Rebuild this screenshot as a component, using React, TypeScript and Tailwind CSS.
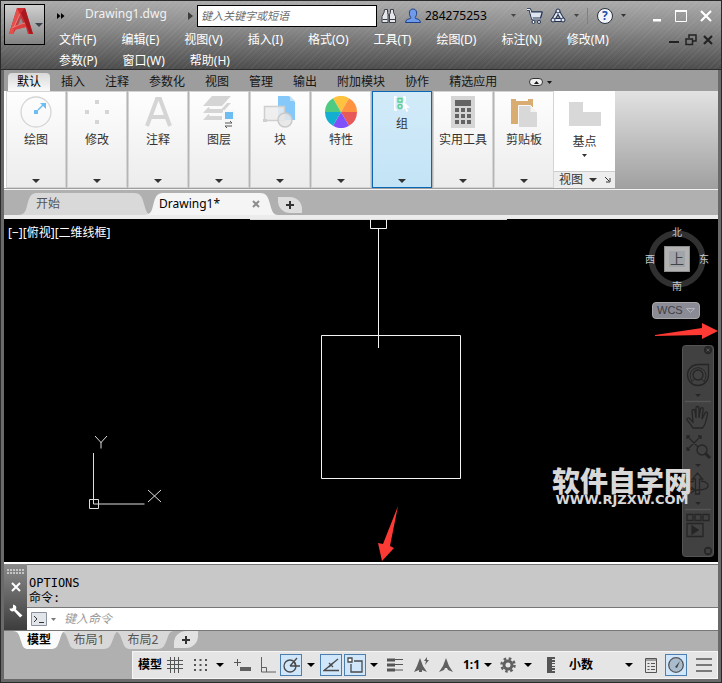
import type { ReactNode } from "react";

const MENUS = [
  "文件(F)", "编辑(E)", "视图(V)", "插入(I)", "格式(O)", "工具(T)",
  "绘图(D)", "标注(N)", "修改(M)", "参数(P)", "窗口(W)", "帮助(H)",
];

const RIBBON_TABS = ["插入", "注释", "参数化", "视图", "管理", "输出", "附加模块", "协作", "精选应用"];

function Caret({ className = "" }: { className?: string }) {
  return (
    <svg width="8" height="4" viewBox="0 0 8 4" className={`shrink-0 ${className}`} aria-hidden="true">
      <path d="M0 0h8L4 4z" fill="currentColor" />
    </svg>
  );
}

function SmallCaret({ className = "" }: { className?: string }) {
  return (
    <svg width="5" height="3" viewBox="0 0 5 3" className={`shrink-0 ${className}`} aria-hidden="true">
      <path d="M0 0h5L2.500 3z" fill="currentColor" />
    </svg>
  );
}

function AppLogo() {
  return (
    <svg width="24" height="26" viewBox="0 0 24 26" className="shrink-0" aria-hidden="true">
      <path d="M8 0h8l8 26h-5l-2-7-10 2-3 5H0z" fill="#cf2a30" />
      <path d="M8 0l3 6L6 19l-2 7H0z" fill="#e4504c" />
      <path d="M16 0l8 26h-3L12 5z" fill="#a8191f" />
      <path d="M11 7l4 8-8 3z" fill="#b5474a" />
      <path d="M12 10l2 5-5 2z" fill="#8f8f8f" />
      <path d="M3 20c4-2 8-4 13-5l1 4-11 3z" fill="#de403e" />
      <path d="M3 20c4-2 8-4 13-5M11 6L5 19" stroke="#f08c86" strokeWidth=".8" fill="none" />
    </svg>
  );
}

function TitleBar() {
  return (
    <div className="flex h-7 items-center pt-px">
      <button aria-label="展开快速访问工具栏" className="ml-3">
        <svg width="8" height="6" viewBox="0 0 8 6" className="block"><path d="M0 0l3.500 3L0 6zM4 0l3.500 3L4 6z" fill="#000" /></svg>
      </button>
      <h1 className="ml-5 w-[103px] pb-1 text-[12px] leading-4 text-[#f2f2f2]">Drawing1.dwg</h1>
      <svg width="5" height="8" viewBox="0 0 5 8" className="mr-1" aria-hidden="true"><path d="M0 0l5 4-5 4z" fill="#3c3c3c" /></svg>
      <input
        type="text"
        aria-label="搜索"
        placeholder="键入关键字或短语"
        className="h-[22px] w-[180px] border border-black bg-white px-[3px] text-[11px] italic text-black outline-none placeholder:text-[#6d6d6d]"
      />
      <button aria-label="查找" className="ml-1">
        <svg width="16" height="16" viewBox="0 0 16 16" className="block" fill="#e4e6e9" stroke="#3a3f48" strokeWidth="1">
          <path d="M3.500 1.500h3v3l.5 2v8h-6v-6l2-4zM9.500 1.500h3v3l2 4v6h-6v-8l1-2z" />
          <path d="M7 7h2M1.500 11.500h5M9 11.500h5.500" />
        </svg>
      </button>
      <button aria-label="用户帐户" className="ml-2 flex items-center gap-1">
        <svg width="16" height="16" viewBox="0 0 16 16" fill="#6f9bea" stroke="#1f3f88">
          <path d="M.5 14.500c0-3 3-3.500 5-4 .6-.3.400-1 0-1.500C3.500 6 4 1 8 1s4.500 5 2.500 8c-.4.5-.6 1.200 0 1.500 2 .5 5 1 5 4z" />
        </svg>
        <span className="text-[12px] leading-4 text-black">284275253</span>
      </button>
      <SmallCaret className="ml-6 text-[#444]" />
      <button aria-label="应用商店" className="ml-[10px]">
        <svg width="17" height="16" viewBox="0 0 17 16" className="block" fill="none" strokeLinejoin="round">
          <path d="M1 1.500h3L6.500 11h8M4.500 4.500h11l-1.500 5H6z" stroke="#20304f" strokeWidth="2.600" />
          <path d="M1 1.500h3L6.500 11h8" stroke="#eef1f7" />
          <path d="M4.500 4.500h11l-1.500 5H6z" fill="#dfe5f0" />
          <circle cx="7.500" cy="14" r="1.500" fill="#fff" stroke="#20304f" /><circle cx="13" cy="14" r="1.500" fill="#fff" stroke="#20304f" />
        </svg>
      </button>
      <button aria-label="保持连接" className="ml-[7px] flex items-center gap-2">
        <svg width="16" height="16" viewBox="0 0 16 16" fill="none">
          <path d="M8 3.500L3 12h10z" stroke="#20304f" strokeWidth="4" strokeLinejoin="round" />
          <path d="M8 3.500L3 12h10z" stroke="#e3e8f2" strokeWidth="2" strokeLinejoin="round" />
          <circle cx="8" cy="3" r="2" fill="#e3e8f2" stroke="#20304f" />
          <circle cx="3" cy="12" r="2" fill="#e3e8f2" stroke="#20304f" />
          <circle cx="13" cy="12" r="2" fill="#e3e8f2" stroke="#20304f" />
        </svg>
        <SmallCaret className="text-[#444]" />
      </button>
      <span className="ml-2 h-4 w-px bg-[#808080]" />
      <button aria-label="帮助" className="ml-[9px] flex items-center gap-2">
        <span className="flex h-4 w-4 items-center justify-center rounded-full border border-[#26313f] bg-[#f2f4f8] text-[12px] font-bold leading-none text-[#1d4fa8]">?</span>
        <SmallCaret className="text-[#333]" />
      </button>
      <div className="ml-auto mr-[9px] flex items-center gap-[13px]">
        <button aria-label="最小化"><svg width="9" height="12" viewBox="0 0 9 12" className="block"><path d="M0 9h8v2.500H0z" fill="#fff" /></svg></button>
        <button aria-label="最大化"><svg width="12" height="12" viewBox="0 0 12 12" className="block"><path d="M.5.5h11v11H.5z" stroke="#fff" fill="none" /><path d="M0 0h12v2H0z" fill="#fff" /></svg></button>
        <button aria-label="关闭"><svg width="12" height="12" viewBox="0 0 12 12" className="block"><path d="M1 1l10 10M11 1L1 11" stroke="#fff" strokeWidth="2.200" /></svg></button>
      </div>
    </div>
  );
}

function Header() {
  return (
    <header className="flex h-[69px] border-b border-[#2d2d2d] bg-[repeating-linear-gradient(135deg,#ffffff0d_0px,#ffffff0d_1px,transparent_1px,transparent_4px),linear-gradient(#ababab,#8a8a8a_40%,#4d4d4d)]">
      <button aria-label="应用程序菜单" className="ml-[3px] mt-[3px] flex h-[41px] w-[41px] shrink-0 items-center border border-black bg-[linear-gradient(#d0d0d0,#828282)] pb-2 pl-1">
        <AppLogo />
        <Caret className="ml-[2px] mt-2 text-[#3d434d]" />
      </button>
      <div className="min-w-0 flex-1">
        <TitleBar />
        <div className="flex pl-[14px]">
          <nav className="flex flex-1 flex-wrap gap-x-[25px] text-[12px] leading-[21px] text-white">
            {MENUS.map((m) => <button key={m}>{m}</button>)}
          </nav>
          <div className="mr-2 flex h-[21px] items-center gap-[6px] pl-2">
            <button aria-label="最小化图形"><svg width="10" height="12" viewBox="0 0 10 12" className="block"><path d="M0 7h10v2H0z" fill="#222" /></svg></button>
            <button aria-label="还原图形"><svg width="12" height="12" viewBox="0 0 12 12" className="block" fill="none" stroke="#222" strokeWidth="1.500"><path d="M4 4V1h7v6H8M1 5h6.500v5.500H1z" /></svg></button>
            <button aria-label="关闭图形"><svg width="10" height="12" viewBox="0 0 10 12" className="block"><path d="M1 2l8 8M9 2l-8 8" stroke="#222" strokeWidth="2.200" /></svg></button>
          </div>
        </div>
      </div>
    </header>
  );
}

function RibbonTabs() {
  return (
    <div className="flex h-[21px] items-end bg-[#9d9d9d] pl-1 text-[12px] leading-[18px] text-[#161616]">
      <button className="h-[18px] w-[42px] rounded-t-sm bg-[linear-gradient(#d8d8d8,#fafafa)] text-black">默认</button>
      <div className="ml-[11px] flex gap-5">
        {RIBBON_TABS.map((t) => <button key={t}>{t}</button>)}
      </div>
      <button aria-label="最小化功能区" className="ml-8 flex h-[18px] items-center gap-1">
        <span className="flex h-2 w-[14px] items-center justify-center rounded-sm border border-[#333] bg-[#f0f0f0]">
          <SmallCaret className="rotate-180" />
        </span>
        <SmallCaret />
      </button>
    </div>
  );
}

const ICONS: Record<string, ReactNode> = {
  draw: (
    <svg width="32" height="32" viewBox="0 0 32 32" fill="none">
      <circle cx="16" cy="16" r="15" stroke="#d5d5d5" strokeWidth="1.300" />
      <path d="M14 14h4v4h-4z" fill="#6dbcf2" /><path d="M18 14l5-5" stroke="#6dbcf2" strokeWidth="1.500" /><path d="M20 7h6v6z" fill="#6dbcf2" />
    </svg>
  ),
  modify: <svg width="32" height="32" viewBox="0 0 32 32" fill="#d5d5d5"><path d="M14 4h4v4h-4zM4 14h4v4H4zM24 14h4v4h-4zM14 24h4v4h-4z" /></svg>,
  annotate: <svg width="32" height="32" viewBox="0 0 32 32"><path d="M5 30L15 3h3l10 27M9 21h15" fill="none" stroke="#d5d5d5" strokeWidth="4" /></svg>,
  layers: (
    <svg width="32" height="34" viewBox="0 0 32 34">
      <path d="M9 1h19l-9 10H0zM5.500 12L0 18h19l9-10h-4l-5.500 6H7zM5.500 19L0 25h19v-4H7z" fill="#d5d5d5" />
      <path d="M20 15h12v18H20z" fill="#f7f7f7" /><path d="M22 17h8v7h-8z" fill="#6dbcf2" />
      <path d="M22 28h7l-2-2M29 31h-7l2 2" stroke="#555" fill="none" />
    </svg>
  ),
  block: (
    <svg width="34" height="34" viewBox="0 0 34 34">
      <path d="M15 1h11l6 6v18H15z" fill="#85c8fa" /><path d="M27 1l5 5h-5z" fill="#bfe2fc" />
      <path d="M1.500 11.500h20v14h-20z" fill="#ececec" fillOpacity=".85" stroke="#cfcfcf" strokeWidth="1.500" />
      <path d="M0 24h4v3H0z" fill="#cfcfcf" /><circle cx="22" cy="25" r="7" fill="#e6e6e6" fillOpacity=".85" stroke="#c9c9c9" strokeWidth="1.500" />
    </svg>
  ),
  properties: (
    <svg width="32" height="32" viewBox="0 0 32 32">
      <path d="M16 16L8 2.140A16 16 0 0 1 24 2.140z" fill="#ffc23f" />
      <path d="M16 16l8-13.860A16 16 0 0 1 32 16z" fill="#ff9340" />
      <path d="M16 16h16a16 16 0 0 1-8 13.860z" fill="#e85858" />
      <path d="M16 16l8 13.860a16 16 0 0 1-16 0z" fill="#8050fb" />
      <path d="M16 16L8 29.860A16 16 0 0 1 0 16z" fill="#13aed0" />
      <path d="M16 16H0A16 16 0 0 1 8 2.140z" fill="#4ecb80" />
    </svg>
  ),
  group: (
    <svg width="16" height="16" viewBox="0 0 16 16" fill="none">
      <path d="M3 1H.8v13H3M9 1h2v5" stroke="#fff" strokeWidth="1.500" />
      <path d="M4 2.500h4v3.500H4z" stroke="#58cf8b" strokeWidth="1.300" /><circle cx="6" cy="10.500" r="2" stroke="#58cf8b" strokeWidth="1.300" />
      <path d="M9 5v9l2-2 1.500 4 1.700-.8-1.700-3.500H16z" fill="#fff" />
    </svg>
  ),
  utilities: (
    <svg width="24" height="32" viewBox="0 0 24 32">
      <path d="M0 0h24v32H0z" fill="#d5d5d5" />
      <path d="M4 4h16v6H4zM4 12h4v4H4zM10 12h4v4h-4zM16 12h4v4h-4zM4 18h4v4H4zM10 18h4v4h-4zM16 18h4v4h-4zM4 24h4v4H4zM10 24h4v4h-4zM16 24h4v4h-4z" fill="#636363" />
    </svg>
  ),
  clipboard: (
    <svg width="26" height="32" viewBox="0 0 26 32">
      <path d="M0 3h5v2h12V3h5v8H8v17H0z" fill="#d9ac72" />
      <path d="M7.500 9.500h12l7 7v15h-19z" fill="#d8d8d8" stroke="#f8f8f8" /><path d="M19.500 9.500v6.500H26z" fill="#f3f3f3" />
    </svg>
  ),
};

const PANELS = [
  { label: "绘图", icon: "draw" }, { label: "修改", icon: "modify" }, { label: "注释", icon: "annotate" },
  { label: "图层", icon: "layers" }, { label: "块", icon: "block" }, { label: "特性", icon: "properties" },
  { label: "组", icon: "group" }, { label: "实用工具", icon: "utilities" }, { label: "剪贴板", icon: "clipboard" },
];

function Ribbon() {
  return (
    <div className="flex h-[98px] border-b border-[#9e9e9e] bg-[linear-gradient(#e2e2e2,#a0a0a0)]">
      <div className="flex gap-px border-l-2 border-white bg-[#b5b5b5] text-[12px] leading-4 text-[#333]">
        {PANELS.map((p) => {
          const active = p.icon === "group";
          return (
            <button
              key={p.icon}
              className={`flex w-[60px] flex-col items-center border pb-1 pt-1 ${active ? "border-[#0b66b5] bg-[linear-gradient(#d3ebf9,#c3e4f6)]" : "border-[#d4d4d4] bg-[linear-gradient(#fefefe,#ececec)]"}`}
            >
              <span className={`flex items-center justify-center ${active ? "h-4" : "h-8"}`}>{ICONS[p.icon]}</span>
              <span className="mt-1 whitespace-nowrap">{p.label}</span>
              <Caret className="mt-auto" />
            </button>
          );
        })}
      </div>
      <div className="flex w-[61px] flex-col bg-white text-[12px] leading-4 text-[#333]">
        <button className="flex flex-1 flex-col items-center pt-[11px]">
          <svg width="32" height="24" viewBox="0 0 32 24"><path d="M0 0h14v10h18v14H0z" fill="#d8d8d8" /></svg>
          <span className="mt-2">基点</span>
          <SmallCaret className="mt-1" />
        </button>
        <button className="flex h-[17px] items-center border-t border-[#ccc] bg-[#ededed] pl-[5px]">
          视图
          <Caret className="ml-[6px]" />
          <svg width="6" height="6" viewBox="0 0 6 6" className="ml-2" aria-hidden="true"><path d="M0 0l4 4M5 1v4H1" stroke="#333" fill="none" /></svg>
        </button>
      </div>
    </div>
  );
}

function FileTabShape({ fill }: { fill: string }) {
  return (
    <svg className="absolute inset-0 h-full w-full" viewBox="0 0 134 22" preserveAspectRatio="none" aria-hidden="true">
      <path d="M0 22C8 22 8 16 10 9C12 2 14 0 20 0H116C123 0 124 4 126 11C128 18 129 22 134 22z" fill={fill} />
    </svg>
  );
}

function FileTabs() {
  return (
    <div className="flex h-[30px] items-end border-b-4 border-t border-b-[#ececec] border-t-[#f2f2f2] bg-[#b0b0b0] pl-[14px]">
      <button className="relative h-[22px] w-[134px] pl-[18px] text-left text-[12px] text-[#555]">
        <FileTabShape fill="#d9d9d9" />
        <span className="relative">开始</span>
      </button>
      <div className="relative -ml-2 flex h-[22px] w-[134px] items-center pl-[15px] pr-[18px] text-[12px] text-black">
        <FileTabShape fill="#f5f5f5" />
        <button className="relative flex-1 text-left">Drawing1*</button>
        <button aria-label="关闭选项卡" className="relative">
          <svg width="8" height="8" viewBox="0 0 8 8" className="block"><path d="M1 1l6 6M7 1L1 7" stroke="#8d8d8d" strokeWidth="2" /></svg>
        </button>
      </div>
      <button aria-label="新建选项卡" className="mb-[2px] flex h-4 w-6 items-center justify-center rounded-bl-xl rounded-tr-xl bg-[#dedede]">
        <svg width="8" height="8" viewBox="0 0 8 8"><path d="M4 0v8M0 4h8" stroke="#333" strokeWidth="2" /></svg>
      </button>
    </div>
  );
}

function NavBar() {
  return (
    <svg width="32" height="212" viewBox="0 0 32 212" fill="none" stroke="#262626" strokeWidth="1.300" role="img" aria-label="导航栏">
      <rect x=".5" y=".5" width="31" height="211" rx="3" fill="#414141" stroke="#555" strokeWidth="1" />
      <circle cx="26" cy="5" r="3.500" fill="#2b2b2b" /><path d="M24.500 3.500l3 3m0-3l-3 3" stroke="#555" strokeWidth="1" />
      <path d="M16 19.500h10.500V30a10.500 10.500 0 1 1-10.500-10.500z" /><circle cx="16" cy="30" r="5" /><path d="M10 36a8 8 0 1 1 12 0M12.500 34l-4 4M19.500 34l4 4" strokeWidth="1" />
      <path d="M13 49h6l-3 3z" fill="#262626" stroke="none" />
      <path d="M3 56.500h26M3 164.500h26" stroke="#555" />
      <path d="M11 83c-2-3-4-6-6-8-1-2 2-3 3-1l3 3-1-11c0-2 3-2 3 0l1 7V63c0-2 3-2 3 0v10l1.500-9c.5-2 3-1.500 2.700.5L20 74l3-6c1-2 3-1 2.500 1-1 6-2 11-5 14z" />
      <path d="M5 91l14 14M19 91L5 105M5 94v-3h3M16 91h3v3M5 102v3h3" /><circle cx="20" cy="105" r="5" fill="#414141" /><path d="M23 108l5 5" strokeWidth="3" />
      <path d="M13 119h6l-3 3z" fill="#262626" stroke="none" />
      <path d="M13.500 149v-15h-3l5-6 5 6h-3v15zM12 136c-12 2-8 9 4 9 13 0 13-8 3-9M9 142l4 3-4 3" />
      <path d="M13 157h6l-3 3z" fill="#262626" stroke="none" />
      <path d="M5 169.500h6v6H5zM13 169.500h6v6h-6zM21 169.500h6v6h-6zM5 178.500h16v13H5z" /><path d="M10 181l6 4-6 4z" fill="#262626" />
      <circle cx="26" cy="206" r="3.500" fill="#2b2b2b" /><path d="M24 205h4M24 207h4" stroke="#555" strokeWidth="1" />
    </svg>
  );
}

function Canvas() {
  return (
    <main className="relative min-h-[343px] flex-1 overflow-hidden bg-black">
      <svg className="absolute left-0 top-0" width="505" height="343" viewBox="0 0 505 343" fill="none" stroke="#f4f4f4" role="img" aria-label="图形">
        <path d="M246 .5h257" stroke="#dcdcdc" />
        <path d="M366.500 0v9.500h16V0M374.500 10v119M317.500 116.500h139v143h-139z" />
        <path d="M89.500 234v51h51M85.500 280.500h9v9h-9zM91 217l6 6.500 6-6.500M97 223v6.500M144 271l13 12M157 271l-13 12" stroke="#ddd" />
        <path d="M394 287l-8 40 4 2-12 13-4-18 5 1z" fill="#fd3a34" stroke="none" />
      </svg>
      <p className="absolute left-1 top-[6px] whitespace-nowrap text-[12px] leading-4 text-white">[−][俯视][二维线框]</p>
      <svg className="absolute right-1 top-px" width="74" height="80" viewBox="0 0 74 80" fontSize="10" fill="#c8c8c8" textAnchor="middle" role="img" aria-label="视图方位">
        <circle cx="37" cy="39" r="25.500" fill="none" stroke="#303030" strokeWidth="6" />
        <rect x="24.500" y="26.500" width="25" height="25" fill="#b2b2b2" stroke="#8d8d8d" />
        <rect x="29" y="31" width="16" height="16" fill="#a1a5aa" />
        <text x="37" y="44" fontSize="14" fill="#3f4448">上</text>
        <text x="37" y="16">北</text><text x="37" y="70">南</text><text x="10" y="43">西</text><text x="64" y="43">东</text>
      </svg>
      <button className="absolute right-[18px] top-[83px] flex h-[17px] w-12 items-center justify-between rounded border border-[#a9a9ac] bg-[#8b8b95] px-1 font-['Liberation_Sans',sans-serif] text-[11px] leading-none text-[#3e3e44]">
        WCS
        <svg width="9" height="5" viewBox="0 0 9 5" aria-hidden="true"><path d="M.5.5h8l-4 4z" fill="none" stroke="#b5b5bd" /></svg>
      </button>
      <svg className="absolute right-0 top-[103px]" width="64" height="18" viewBox="0 0 64 18" aria-hidden="true"><path d="M1 13l47-7V1l16 8-16 8v-4L1 14z" fill="#fd3a34" /></svg>
      <div className="absolute right-1 top-[126px]"><NavBar /></div>
      <div className="absolute right-[26px] top-[248px] text-center text-[#d8d8d8]">
        <p className="text-[28px] font-black leading-7">软件自学网</p>
        <p className="font-['DejaVu_Sans',sans-serif] text-[13px] font-bold leading-[10px]">WWW.RJZXW.COM</p>
      </div>
    </main>
  );
}

function CommandLine() {
  return (
    <section aria-label="命令行" className="flex h-[69px] border-b border-t-2 border-b-[#777] border-t-white">
      <div className="flex w-[23px] shrink-0 flex-col items-center gap-2 bg-[linear-gradient(#8a8a8a,#3d3d3d)] pt-[5px]">
        <svg width="18" height="5" viewBox="0 0 18 5" aria-hidden="true"><path d="M0 1h18M0 4h18" stroke="#c5c5c5" strokeWidth="2" strokeDasharray="2 1" /></svg>
        <button aria-label="关闭命令行"><svg width="10" height="10" viewBox="0 0 10 10" className="block"><path d="M1 1l8 8M9 1L1 9" stroke="#fff" strokeWidth="2" /></svg></button>
        <button aria-label="自定义" className="mt-1"><svg width="14" height="14" viewBox="0 0 14 14" className="block"><path d="M4 .5v3L3 4.500H.5C1 7 3 8 5 7l6 6.500 2.500-2L7 5.500C8 3 7 1 4 .5z" fill="#fff" /></svg></button>
      </div>
      <div className="flex min-w-0 flex-1 flex-col border-t border-[#777]">
        <div className="flex-1 bg-[#c8c8c8] pl-[2px] pt-[11px] text-[12px] leading-[15px] text-black">
          <p className="font-['DejaVu_Sans_Mono',monospace]">OPTIONS</p>
          <p className="font-['DejaVu_Sans_Mono','Noto_Sans_CJK_SC',monospace]">命令:</p>
        </div>
        <div className="flex h-[23px] items-center border-t border-[#777] bg-white pl-1">
          <button aria-label="最近使用的命令" className="flex items-center gap-1">
            <svg width="16" height="14" viewBox="0 0 16 14"><path d="M.5.5h15v13H.5z" fill="#e2e5ea" stroke="#8b929c" /><path d="M3 4l3 3-3 3M8 10.500h5" stroke="#333" fill="none" /></svg>
            <SmallCaret className="text-[#777]" />
          </button>
          <input type="text" aria-label="命令" placeholder="键入命令" className="ml-2 min-w-0 flex-1 bg-transparent text-[12px] italic outline-none placeholder:text-[#999]" />
        </div>
      </div>
    </section>
  );
}

function LayoutTabs() {
  const tabs = ["模型", "布局1", "布局2"];
  return (
    <div className="flex h-5 items-start bg-[#b0b0b0] pl-2 text-[12px] leading-[18px]">
      {tabs.map((t, i) => (
        <button key={t} className={`relative -mr-2 h-[18px] ${i === 0 ? "z-10 w-[54px] font-bold text-black" : "w-[62px] text-[#555]"}`}>
          <svg className="absolute inset-0 h-full w-full" viewBox="0 0 60 18" preserveAspectRatio="none" aria-hidden="true">
            <path d="M0 0C8 0 8 5 10 10C12 16 13 18 18 18H44C50 18 51 14 53 9C55 3 56 0 60 0z" fill={i === 0 ? "#fafafa" : "#d8d8d8"} />
          </svg>
          <span className="relative">{t}</span>
        </button>
      ))}
      <button aria-label="新建布局" className="ml-2 flex h-[17px] w-6 items-center justify-center rounded-br-xl rounded-tl-xl bg-[#e2e2e2]">
        <svg width="8" height="8" viewBox="0 0 8 8"><path d="M4 0v8M0 4h8" stroke="#333" strokeWidth="2" /></svg>
      </button>
    </div>
  );
}

function Cell({ label, className, on = false, children }: { label: string; className: string; on?: boolean; children: ReactNode }) {
  return (
    <button
      aria-label={label}
      aria-pressed={on}
      className={`flex h-[22px] shrink-0 items-center justify-center ${on ? "border border-[#4d7fae] bg-[#cfe6fb]" : ""} ${className}`}
    >
      {children}
    </button>
  );
}

function StatusBar() {
  return (
    <div className="flex h-7 justify-end bg-[#b0b0b0]">
      <div className="flex items-center border border-[#f5f5f5] bg-[#e5e5e5] text-[12px] font-bold leading-4 text-black">
        <button className="w-[29px] text-right">模型</button>
        <Cell label="栅格" className="w-[26px]"><svg width="16" height="16" viewBox="0 0 16 16"><path d="M3.500 0v16M7.500 0v16M11.500 0v16M0 3.500h16M0 7.500h16M0 11.500h16" stroke="#555" /></svg></Cell>
        <Cell label="捕捉" className="w-6"><svg width="13" height="13" viewBox="0 0 13 13"><path d="M0 1h13M0 6h13M0 11h13" stroke="#555" strokeWidth="2" strokeDasharray="2 3.500" /></svg></Cell>
        <Cell label="捕捉设置" className="w-4"><Caret /></Cell>
        <Cell label="动态输入" className="w-7"><svg width="17" height="13" viewBox="0 0 17 13"><path d="M0 3.500h7M3.500 0v7" stroke="#555" /><path d="M6 8h11v4H6z" fill="#606060" /></svg></Cell>
        <Cell label="正交" className="w-6"><svg width="16" height="16" viewBox="0 0 16 16"><path d="M1.500 0v15H16M1.500 10.500h5V15" stroke="#606060" fill="none" /></svg></Cell>
        <Cell label="极轴追踪" on className="w-[22px]"><svg width="17" height="16" viewBox="0 0 17 16" className="shrink-0" fill="none" stroke="#4a4a4a" strokeWidth="1.300"><circle cx="7" cy="9" r="6" /><path d="M7 9h10M7 9l7-8M11 5c1 1 1.500 3 1 5" /></svg></Cell>
        <Cell label="极轴设置" className="w-[18px]"><Caret /></Cell>
        <Cell label="对象捕捉追踪" on className="w-[22px]"><svg width="16" height="14" viewBox="0 0 16 14" className="shrink-0" fill="none" stroke="#4a4a4a" strokeWidth="1.300"><path d="M16 12.500H1L15 1" /><path d="M6 5l4 4M10 5L6 9" /></svg></Cell>
        <Cell label="对象捕捉" on className="ml-[2px] w-[22px]"><svg width="17" height="17" viewBox="0 0 17 17" className="shrink-0" fill="none" stroke="#4a4a4a" strokeWidth="1.300"><path d="M7 4h8v11H4V7" /><path d="M1 1h4v4H1z" fill="#fff" /></svg></Cell>
        <Cell label="对象捕捉设置" className="w-4"><Caret /></Cell>
        <Cell label="线宽" className="w-[26px]"><svg width="16" height="14" viewBox="0 0 16 14" stroke="#555"><path d="M0 1.500h16M0 6.500h16M0 12h16" strokeWidth="1" /><path d="M0 2h8M0 7h8M0 12h8" strokeWidth="3" /></svg></Cell>
        <Cell label="注释可见性" className="w-[26px]"><svg width="16" height="16" viewBox="0 0 16 16"><path d="M7 1l3 8 4 6-5-2v2H6v-2l-5 2 3-6zM14 0l-3 4h2l-1 4 4-5h-2z" fill="#606060" /></svg></Cell>
        <Cell label="自动缩放" className="w-6"><svg width="16" height="16" viewBox="0 0 16 16"><path d="M8 1l3 8 4 6-5-2-1-2H7l-1 2-5 2 4-6z" fill="#606060" /></svg></Cell>
        <button className="flex w-[34px] items-center justify-end gap-1">1:1 <Caret /></button>
        <Cell label="切换工作空间" className="w-[47px] gap-2">
          <svg width="16" height="16" viewBox="0 0 16 16" fill="none" stroke="#606060"><circle cx="8" cy="8" r="4" strokeWidth="3" /><circle cx="8" cy="8" r="6.500" strokeWidth="2.500" strokeDasharray="2.550 2.550" /></svg>
          <Caret />
        </Cell>
        <span className="flex w-6 justify-center"><svg width="8" height="16" viewBox="0 0 8 16" aria-hidden="true"><path d="M0 0h8v2H5v1h3v2H5v1h3v1H5v2h3v1H5v1h3v2H5v1h3v2H0z" fill="#555" /></svg></span>
        <label className="flex w-[74px] items-center pl-[6px] pr-1">
          <span className="sr-only">单位</span>
          <select className="h-5 min-w-0 flex-1 appearance-none bg-transparent font-bold leading-5 outline-none"><option>小数</option></select>
          <Caret />
        </label>
        <Cell label="快捷特性" className="w-7"><svg width="12" height="15" viewBox="0 0 12 15" fill="none" stroke="#555"><path d="M.5.5h11v14H.5zM.5 2h11" /><path d="M2.500 5.500h2M6 5.500h4M2.500 8.500h2M6 8.500h4M2.500 11.500h2M6 11.500h4" /></svg></Cell>
        <Cell label="硬件加速" on className="w-[22px]"><svg width="16" height="16" viewBox="0 0 16 16" className="shrink-0"><circle cx="8" cy="8" r="7.300" fill="#a9bccd" stroke="#555" strokeWidth="1.300" /><path d="M7 10l5-6-3 7z" fill="#444" /></svg></Cell>
        <Cell label="自定义" className="ml-1 w-[26px]"><svg width="16" height="14" viewBox="0 0 16 14"><path d="M0 1h16M0 7h16M0 13h16" stroke="#555" strokeWidth="1.500" /></svg></Cell>
      </div>
    </div>
  );
}

export default function App() {
  return (
    <div className="flex min-h-screen flex-col border border-[#2b2a2b] bg-[#6a6a6a] font-['Noto_Sans','Noto_Sans_CJK_SC',sans-serif]">
      <Header />
      <div className="mx-[3px] mb-[3px] flex flex-1 flex-col">
        <RibbonTabs />
        <Ribbon />
        <FileTabs />
        <Canvas />
        <CommandLine />
        <LayoutTabs />
        <StatusBar />
      </div>
    </div>
  );
}
